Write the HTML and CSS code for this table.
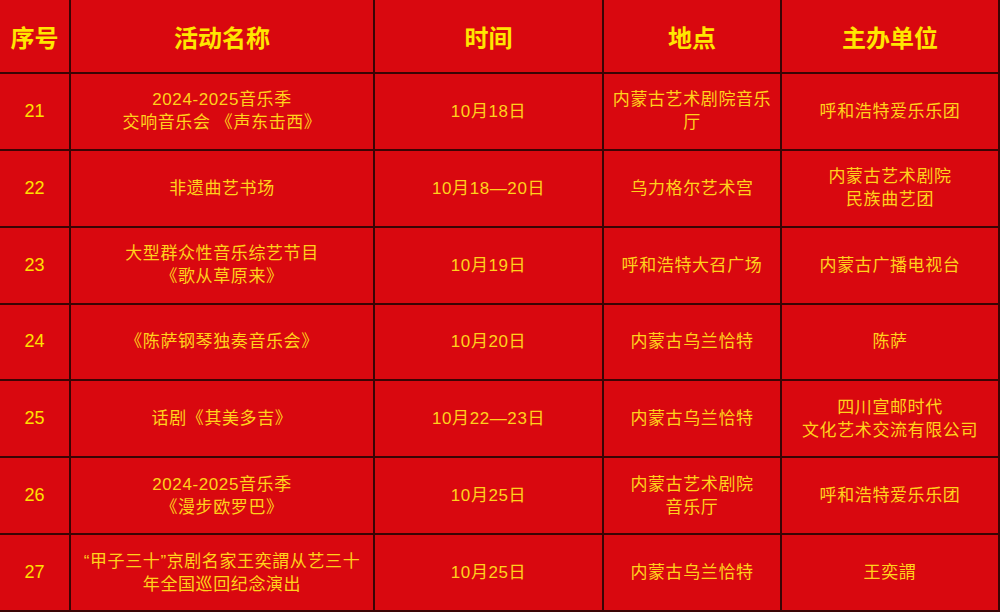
FILE: index.html
```html
<!DOCTYPE html>
<html lang="zh">
<head>
<meta charset="utf-8">
<link rel="stylesheet" href="styles.css">
</head>
<body>
<div class="table">
  <div class="cell head">序号</div>
  <div class="cell head">活动名称</div>
  <div class="cell head">时间</div>
  <div class="cell head">地点</div>
  <div class="cell head">主办单位</div>

  <div class="cell num">21</div>
  <div class="cell">2024-2025音乐季<br>交响音乐会 《声东击西》</div>
  <div class="cell">10月18日</div>
  <div class="cell">内蒙古艺术剧院音乐<br>厅</div>
  <div class="cell">呼和浩特爱乐乐团</div>

  <div class="cell num">22</div>
  <div class="cell">非遗曲艺书场</div>
  <div class="cell">10月18—20日</div>
  <div class="cell">乌力格尔艺术宫</div>
  <div class="cell">内蒙古艺术剧院<br>民族曲艺团</div>

  <div class="cell num">23</div>
  <div class="cell">大型群众性音乐综艺节目<br>《歌从草原来》</div>
  <div class="cell">10月19日</div>
  <div class="cell">呼和浩特大召广场</div>
  <div class="cell">内蒙古广播电视台</div>

  <div class="cell num">24</div>
  <div class="cell">《陈萨钢琴独奏音乐会》</div>
  <div class="cell">10月20日</div>
  <div class="cell">内蒙古乌兰恰特</div>
  <div class="cell">陈萨</div>

  <div class="cell num">25</div>
  <div class="cell">话剧《其美多吉》</div>
  <div class="cell">10月22—23日</div>
  <div class="cell">内蒙古乌兰恰特</div>
  <div class="cell">四川宣邮时代<br>文化艺术交流有限公司</div>

  <div class="cell num">26</div>
  <div class="cell">2024-2025音乐季<br>《漫步欧罗巴》</div>
  <div class="cell">10月25日</div>
  <div class="cell">内蒙古艺术剧院<br>音乐厅</div>
  <div class="cell">呼和浩特爱乐乐团</div>

  <div class="cell num">27</div>
  <div class="cell">“甲子三十”京剧名家王奕謂从艺三十<br>年全国巡回纪念演出</div>
  <div class="cell">10月25日</div>
  <div class="cell">内蒙古乌兰恰特</div>
  <div class="cell">王奕謂</div>
</div>
</body>
</html>
```
FILE: styles.css
```css
html, body {
  margin: 0;
  padding: 0;
  background: #3a0404;
}
.table {
  width: 1000px;
  height: 612px;
  box-sizing: border-box;
  padding: 0 2px 2px 0;
  display: grid;
  grid-template-columns: 69px 302px 227px 176px 216px;
  grid-template-rows: 72px repeat(7, 1fr);
  gap: 2px;
  background: #3a0404;
  font-family: "Liberation Sans", "Noto Sans CJK SC", sans-serif;
}
.cell {
  background: #d9080f;
  color: #ffd21c;
  font-size: 17px;
  line-height: 23px;
  letter-spacing: 0.6px;
  display: flex;
  align-items: center;
  justify-content: center;
  text-align: center;
}
.cell.head {
  color: #ffe600;
  font-size: 24px;
  font-weight: bold;
  letter-spacing: 0;
  padding-top: 4px;
}
.cell.num {
  color: #ffe000;
  font-size: 18px;
  letter-spacing: 0;
}
```
